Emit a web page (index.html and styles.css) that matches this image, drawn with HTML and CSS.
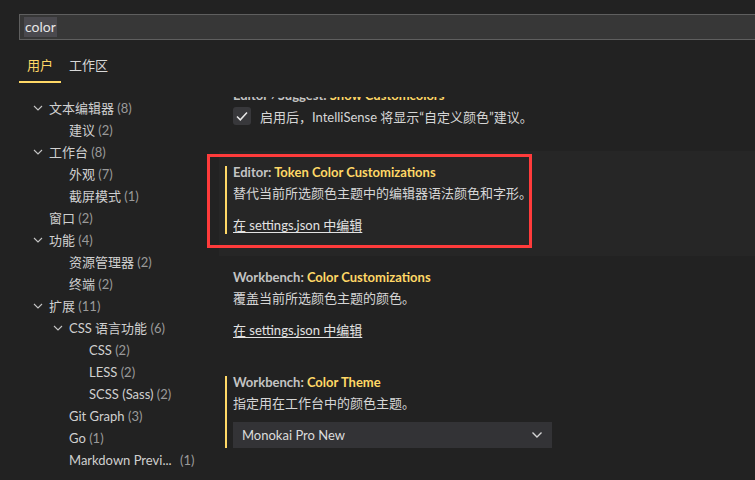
FILE: index.html
```html
<!DOCTYPE html>
<html lang="zh-CN">
<head>
<meta charset="utf-8">
<link rel="stylesheet" href="styles.css">
</head>
<body>
<div class="header">
  <div class="search"><span class="sel">color</span></div>
  <div class="tabs">
    <div class="tab active">用户</div>
    <div class="tab">工作区</div>
  </div>
</div>
<div class="main">
  <div class="tree">
    <div class="node l1"><span class="tw"><svg width="10" height="6" viewBox="0 0 10 6"><path d="M1 1 L5 5 L9 1" fill="none" stroke="#c5c5c5" stroke-width="1.1"/></svg></span>文本编辑器 <span class="cnt">(8)</span></div>
    <div class="node l2"><span class="tw"></span>建议 <span class="cnt">(2)</span></div>
    <div class="node l1"><span class="tw"><svg width="10" height="6" viewBox="0 0 10 6"><path d="M1 1 L5 5 L9 1" fill="none" stroke="#c5c5c5" stroke-width="1.1"/></svg></span>工作台 <span class="cnt">(8)</span></div>
    <div class="node l2"><span class="tw"></span>外观 <span class="cnt">(7)</span></div>
    <div class="node l2"><span class="tw"></span>截屏模式 <span class="cnt">(1)</span></div>
    <div class="node l1"><span class="tw"></span>窗口 <span class="cnt">(2)</span></div>
    <div class="node l1"><span class="tw"><svg width="10" height="6" viewBox="0 0 10 6"><path d="M1 1 L5 5 L9 1" fill="none" stroke="#c5c5c5" stroke-width="1.1"/></svg></span>功能 <span class="cnt">(4)</span></div>
    <div class="node l2"><span class="tw"></span>资源管理器 <span class="cnt">(2)</span></div>
    <div class="node l2"><span class="tw"></span>终端 <span class="cnt">(2)</span></div>
    <div class="node l1"><span class="tw"><svg width="10" height="6" viewBox="0 0 10 6"><path d="M1 1 L5 5 L9 1" fill="none" stroke="#c5c5c5" stroke-width="1.1"/></svg></span>扩展 <span class="cnt">(11)</span></div>
    <div class="node l2"><span class="tw"><svg width="10" height="6" viewBox="0 0 10 6"><path d="M1 1 L5 5 L9 1" fill="none" stroke="#c5c5c5" stroke-width="1.1"/></svg></span>CSS 语言功能 <span class="cnt">(6)</span></div>
    <div class="node l3"><span class="tw"></span>CSS <span class="cnt">(2)</span></div>
    <div class="node l3"><span class="tw"></span>LESS <span class="cnt">(2)</span></div>
    <div class="node l3"><span class="tw"></span>SCSS (Sass) <span class="cnt">(2)</span></div>
    <div class="node l2"><span class="tw"></span>Git Graph <span class="cnt">(3)</span></div>
    <div class="node l2"><span class="tw"></span>Go <span class="cnt">(1)</span></div>
    <div class="node l2"><span class="tw"></span>Markdown Previ... <span class="cnt gap">(1)</span></div>
  </div>
  <div class="list">
    <div class="scroll">
      <div class="row first">
        <div class="item">
          <div class="title"><span class="cat">Editor › Suggest: </span><span class="name">Show Customcolors</span></div>
          <div class="check-row">
            <span class="checkbox"><svg width="14" height="14" viewBox="0 0 14 14"><path d="M2 7.5 L5.3 10.8 L12 3.5" fill="none" stroke="#e8e8e8" stroke-width="1.5"/></svg></span>
            <span class="desc-inline">启用后，IntelliSense 将显示“自定义颜色”建议。</span>
          </div>
        </div>
      </div>
      <div class="row focused">
        <div class="item modified">
          <div class="title"><span class="cat">Editor: </span><span class="name">Token Color Customizations</span></div>
          <div class="desc">替代当前所选颜色主题中的编辑器语法颜色和字形。</div>
          <a class="link">在 settings.json 中编辑</a>
        </div>
      </div>
      <div class="row">
        <div class="item">
          <div class="title"><span class="cat">Workbench: </span><span class="name">Color Customizations</span></div>
          <div class="desc">覆盖当前所选颜色主题的颜色。</div>
          <a class="link">在 settings.json 中编辑</a>
        </div>
      </div>
      <div class="row">
        <div class="item modified">
          <div class="title"><span class="cat">Workbench: </span><span class="name">Color Theme</span></div>
          <div class="desc">指定用在工作台中的颜色主题。</div>
          <div class="select"><span>Monokai Pro New</span><svg width="12" height="8" viewBox="0 0 12 8"><path d="M1.5 1.5 L6 6 L10.5 1.5" fill="none" stroke="#d4d4d4" stroke-width="1.4"/></svg></div>
        </div>
      </div>
    </div>
  </div>
  <div class="annot"></div>
</div>
</body>
</html>
```
FILE: styles.css
```css
html, body {
  margin: 0;
  padding: 0;
  background: #222222;
  width: 755px;
  height: 480px;
  overflow: hidden;
  font-family: Lato, "Noto Sans CJK SC", sans-serif;
  font-size: 13px;
  color: #cccccc;
}

.header {
  padding: 14px 0 0 19px;
  height: 97px;
  box-sizing: border-box;
}

.search {
  height: 26px;
  box-sizing: border-box;
  background: #373737;
  border: 1px solid #5f5f5f;
  border-right: none;
  display: flex;
  align-items: center;
  padding-left: 4px;
  font-size: 14px;
  color: #e6e6e6;
}

.sel {
  background: #4a494e;
  line-height: 20px;
  padding: 0 1px;
}

.tabs {
  display: flex;
  margin-top: 16px;
}

.tab {
  padding: 0 8px;
  height: 27px;
  line-height: 18px;
  font-size: 13px;
  color: #d8d8d8;
  box-sizing: border-box;
}

.tab.active {
  color: #ffd866;
  border-bottom: 2px solid #ffd866;
}

.main {
  display: flex;
  position: relative;
  height: 383px;
}

.tree {
  width: 219px;
  flex: none;
}

.node {
  height: 22px;
  line-height: 22px;
  display: flex;
  align-items: center;
  white-space: pre;
  color: #d0d0d0;
}

.node .tw {
  width: 20px;
  flex: none;
  display: flex;
  align-items: center;
  padding-left: 4px;
  box-sizing: border-box;
}

.l1 { padding-left: 29px; }
.l2 { padding-left: 49px; }
.l3 { padding-left: 69px; }

.cnt {
  color: #9a9a9a;
}

.cnt.gap {
  margin-left: 5px;
}

.list {
  flex: 1;
  overflow: hidden;
}

.scroll {
  margin-top: -23px;
}

.row {
  padding: 15px 14px 19px 6px;
}

.row.first {
  padding-bottom: 26px;
}

.row.focused {
  background: #262626;
}

.item {
  padding-left: 8px;
}

.item.modified {
  box-shadow: inset 2px 0 0 #ffd866;
}

.title {
  line-height: 12px;
  font-weight: bold;
  white-space: nowrap;
}

.cat {
  color: #c4c4c4;
}

.name {
  color: #ffd866;
}

.desc {
  margin-top: 6px;
  line-height: 18px;
  color: #d6d6d6;
}

.link {
  display: block;
  margin-top: 14px;
  margin-bottom: 3px;
  line-height: 18px;
  color: #e2e2e2;
  text-decoration: underline;
  text-underline-offset: 2px;
}

.check-row {
  margin-top: 6px;
  display: flex;
  align-items: center;
  height: 18px;
}

.checkbox {
  width: 18px;
  height: 18px;
  box-sizing: border-box;
  background: #38383b;
  border-radius: 3px;
  display: flex;
  align-items: center;
  justify-content: center;
  margin-right: 9px;
}

.desc-inline {
  color: #d6d6d6;
}

.select {
  margin-top: 10px;
  height: 26px;
  width: 319px;
  background: #333336;
  display: flex;
  align-items: center;
  justify-content: space-between;
  padding: 0 9px;
  box-sizing: border-box;
  color: #dcdcdc;
}

.annot {
  position: absolute;
  left: 207px;
  top: 57px;
  width: 325px;
  height: 94px;
  box-sizing: border-box;
  border: 3px solid #ff3b3b;
  pointer-events: none;
}
```
